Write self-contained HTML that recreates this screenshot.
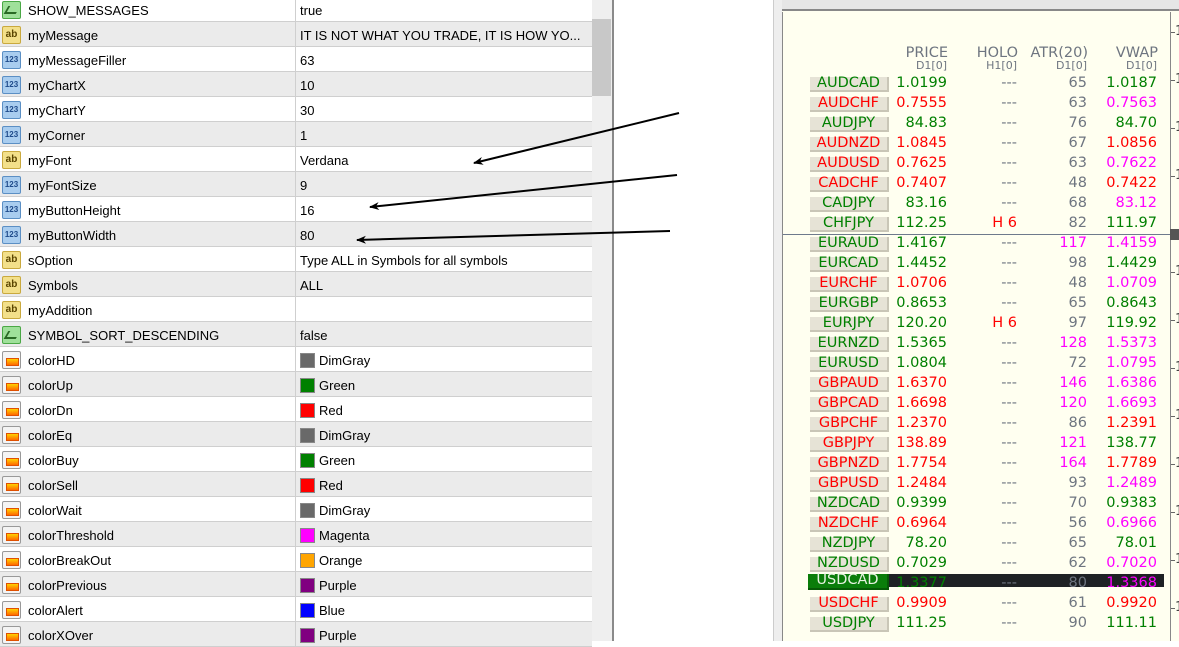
<!DOCTYPE html>
<html><head><meta charset="utf-8"><style>
*{margin:0;padding:0;box-sizing:border-box}
body{width:1179px;height:641px;overflow:hidden;background:#fff;position:relative;font-family:Tahoma,"Liberation Sans",sans-serif;font-size:13px;color:#000}
.r{position:absolute;left:0;width:592px;height:25px;border-bottom:1px solid #cfcfcf;background:#fff}
.r.g{background:#ebebeb}
.r .n{position:absolute;left:28px;top:6px}
.r .v{position:absolute;left:300px;top:6px;white-space:nowrap}
.r .d{position:absolute;left:295px;top:0;width:1px;height:25px;background:#cfcfcf}
.ic{position:absolute;left:2px;top:4px;width:19px;height:18px;border-radius:2px}
.ab{background:#f3e08a;border:1px solid #c9a93e;font:bold 10px "Liberation Sans",sans-serif;color:#5a4500;text-align:center;line-height:16px}
.nm{background:#a9cdef;border:1px solid #5b8fc4;font:bold 8px "Liberation Sans",sans-serif;color:#1e4a8a;text-align:center;line-height:16px}
.bo{background:#9fe09a;border:1px solid #4aa845}
.bo:after{content:"";position:absolute;left:3px;top:4px;width:10px;height:6px;border-left:2px solid #2a6a25;border-bottom:2px solid #2a6a25;transform:skewX(-30deg)}
.co{background:#f4f4f4;border:1px solid #999}
.co:after{content:"";position:absolute;left:3px;top:6px;width:11px;height:6px;background:linear-gradient(#ffd200,#ff6a00);border:1px solid #e05000}
.sw{display:inline-block;width:15px;height:15px;border:1px solid #888;vertical-align:-3px;margin-right:4px}
#sb{position:absolute;left:592px;top:0;width:20px;height:641px;background:#efefef}
#th{position:absolute;left:592px;top:19px;width:19px;height:77px;background:#c8c8c8}
#bd{position:absolute;left:612px;top:0;width:2px;height:641px;background:#8a8a8a}
#gs{position:absolute;left:773px;top:0;width:9px;height:641px;background:#eeeeee;border-left:1px solid #ccc}
#ch{position:absolute;left:782px;top:0;width:397px;height:641px;background:#fffff0}
#ct{position:absolute;left:782px;top:0;width:397px;height:9px;background:#e6e6e6}
#cl{position:absolute;left:782px;top:9px;width:397px;height:2px;background:#888}
#cb{position:absolute;left:782px;top:12px;width:1px;height:629px;background:#888}
#ax{position:absolute;left:1170px;top:12px;width:1px;height:629px;background:#888}
.tk{position:absolute;left:1171px;width:4px;height:1px;background:#666}
.tl{position:absolute;left:1175px;font:13px "DejaVu Sans",sans-serif;color:#444}
.q{position:absolute;left:783px;width:387px;height:20px;font:14.5px "DejaVu Sans",Verdana,sans-serif;white-space:nowrap}
.q span{position:absolute;top:0}
.btn{left:27px;width:79px;height:15px;top:2px!important;background:#e6e3d6;border-right:2px solid #c9c6b7;border-bottom:2px solid #c9c6b7;text-align:center;line-height:13px}
.p{right:223px}.h{right:153px}.a{right:83px}.w{right:13px}
.G{color:#008000}.R{color:#ff0000}.M{color:#ff00ff}.S{color:#6e7580}
.hd{position:absolute;font:14.5px "DejaVu Sans",sans-serif;color:#6e7580;text-align:right}
.hs{position:absolute;font:11px "DejaVu Sans",sans-serif;color:#6e7580;text-align:right}
</style></head><body>
<div class="r" style="top:-3px"><div class="ic bo"></div><span class="n">SHOW_MESSAGES</span><div class="d"></div><span class="v">true</span></div>
<div class="r g" style="top:22px"><div class="ic ab">ab</div><span class="n">myMessage</span><div class="d"></div><span class="v">IT IS NOT WHAT YOU TRADE, IT IS HOW YO...</span></div>
<div class="r" style="top:47px"><div class="ic nm">123</div><span class="n">myMessageFiller</span><div class="d"></div><span class="v">63</span></div>
<div class="r g" style="top:72px"><div class="ic nm">123</div><span class="n">myChartX</span><div class="d"></div><span class="v">10</span></div>
<div class="r" style="top:97px"><div class="ic nm">123</div><span class="n">myChartY</span><div class="d"></div><span class="v">30</span></div>
<div class="r g" style="top:122px"><div class="ic nm">123</div><span class="n">myCorner</span><div class="d"></div><span class="v">1</span></div>
<div class="r" style="top:147px"><div class="ic ab">ab</div><span class="n">myFont</span><div class="d"></div><span class="v">Verdana</span></div>
<div class="r g" style="top:172px"><div class="ic nm">123</div><span class="n">myFontSize</span><div class="d"></div><span class="v">9</span></div>
<div class="r" style="top:197px"><div class="ic nm">123</div><span class="n">myButtonHeight</span><div class="d"></div><span class="v">16</span></div>
<div class="r g" style="top:222px"><div class="ic nm">123</div><span class="n">myButtonWidth</span><div class="d"></div><span class="v">80</span></div>
<div class="r" style="top:247px"><div class="ic ab">ab</div><span class="n">sOption</span><div class="d"></div><span class="v">Type ALL in Symbols for all symbols</span></div>
<div class="r g" style="top:272px"><div class="ic ab">ab</div><span class="n">Symbols</span><div class="d"></div><span class="v">ALL</span></div>
<div class="r" style="top:297px"><div class="ic ab">ab</div><span class="n">myAddition</span><div class="d"></div><span class="v"></span></div>
<div class="r g" style="top:322px"><div class="ic bo"></div><span class="n">SYMBOL_SORT_DESCENDING</span><div class="d"></div><span class="v">false</span></div>
<div class="r" style="top:347px"><div class="ic co"></div><span class="n">colorHD</span><div class="d"></div><span class="v"><i class="sw" style="background:#696969"></i>DimGray</span></div>
<div class="r g" style="top:372px"><div class="ic co"></div><span class="n">colorUp</span><div class="d"></div><span class="v"><i class="sw" style="background:#008000"></i>Green</span></div>
<div class="r" style="top:397px"><div class="ic co"></div><span class="n">colorDn</span><div class="d"></div><span class="v"><i class="sw" style="background:#f00"></i>Red</span></div>
<div class="r g" style="top:422px"><div class="ic co"></div><span class="n">colorEq</span><div class="d"></div><span class="v"><i class="sw" style="background:#696969"></i>DimGray</span></div>
<div class="r" style="top:447px"><div class="ic co"></div><span class="n">colorBuy</span><div class="d"></div><span class="v"><i class="sw" style="background:#008000"></i>Green</span></div>
<div class="r g" style="top:472px"><div class="ic co"></div><span class="n">colorSell</span><div class="d"></div><span class="v"><i class="sw" style="background:#f00"></i>Red</span></div>
<div class="r" style="top:497px"><div class="ic co"></div><span class="n">colorWait</span><div class="d"></div><span class="v"><i class="sw" style="background:#696969"></i>DimGray</span></div>
<div class="r g" style="top:522px"><div class="ic co"></div><span class="n">colorThreshold</span><div class="d"></div><span class="v"><i class="sw" style="background:#f0f"></i>Magenta</span></div>
<div class="r" style="top:547px"><div class="ic co"></div><span class="n">colorBreakOut</span><div class="d"></div><span class="v"><i class="sw" style="background:#ffa500"></i>Orange</span></div>
<div class="r g" style="top:572px"><div class="ic co"></div><span class="n">colorPrevious</span><div class="d"></div><span class="v"><i class="sw" style="background:#800080"></i>Purple</span></div>
<div class="r" style="top:597px"><div class="ic co"></div><span class="n">colorAlert</span><div class="d"></div><span class="v"><i class="sw" style="background:#00f"></i>Blue</span></div>
<div class="r g" style="top:622px"><div class="ic co"></div><span class="n">colorXOver</span><div class="d"></div><span class="v"><i class="sw" style="background:#800080"></i>Purple</span></div>

<div id="sb"></div><div id="th"></div><div id="bd"></div><div id="gs"></div>
<div id="ch"></div><div id="ct"></div><div id="cl"></div><div id="cb"></div><div id="ax"></div>
<div class="tk" style="top:32px"></div><div class="tl" style="top:24px">1</div>
<div class="tk" style="top:80px"></div><div class="tl" style="top:72px">1</div>
<div class="tk" style="top:128px"></div><div class="tl" style="top:120px">1</div>
<div class="tk" style="top:176px"></div><div class="tl" style="top:168px">1</div>
<div class="tk" style="top:272px"></div><div class="tl" style="top:264px">1</div>
<div class="tk" style="top:320px"></div><div class="tl" style="top:312px">1</div>
<div class="tk" style="top:368px"></div><div class="tl" style="top:360px">1</div>
<div class="tk" style="top:416px"></div><div class="tl" style="top:408px">1</div>
<div class="tk" style="top:464px"></div><div class="tl" style="top:456px">1</div>
<div class="tk" style="top:512px"></div><div class="tl" style="top:504px">1</div>
<div class="tk" style="top:560px"></div><div class="tl" style="top:552px">1</div>
<div class="tk" style="top:608px"></div><div class="tl" style="top:600px">1</div>
<div style="position:absolute;left:1170px;top:229px;width:9px;height:11px;background:#555"></div>
<div style="position:absolute;left:783px;top:234px;width:387px;height:1px;background:#6e7a8c"></div>

<div class="hd" style="left:880px;width:68px;top:45px">PRICE</div><div class="hs" style="left:880px;width:67px;top:59px">D1[0]</div>
<div class="hd" style="left:950px;width:68px;top:45px">HOLO</div><div class="hs" style="left:950px;width:67px;top:59px">H1[0]</div>
<div class="hd" style="left:1000px;width:88px;top:45px">ATR(20)</div><div class="hs" style="left:1020px;width:67px;top:59px">D1[0]</div>
<div class="hd" style="left:1090px;width:68px;top:45px">VWAP</div><div class="hs" style="left:1090px;width:67px;top:59px">D1[0]</div>

<div class="q" style="top:75px"><span class="btn G">AUDCAD</span><span class="p G">1.0199</span><span class="h S">---</span><span class="a S">65</span><span class="w G">1.0187</span></div>
<div class="q" style="top:95px"><span class="btn R">AUDCHF</span><span class="p R">0.7555</span><span class="h S">---</span><span class="a S">63</span><span class="w M">0.7563</span></div>
<div class="q" style="top:115px"><span class="btn G">AUDJPY</span><span class="p G">84.83</span><span class="h S">---</span><span class="a S">76</span><span class="w G">84.70</span></div>
<div class="q" style="top:135px"><span class="btn R">AUDNZD</span><span class="p R">1.0845</span><span class="h S">---</span><span class="a S">67</span><span class="w R">1.0856</span></div>
<div class="q" style="top:155px"><span class="btn R">AUDUSD</span><span class="p R">0.7625</span><span class="h S">---</span><span class="a S">63</span><span class="w M">0.7622</span></div>
<div class="q" style="top:175px"><span class="btn R">CADCHF</span><span class="p R">0.7407</span><span class="h S">---</span><span class="a S">48</span><span class="w R">0.7422</span></div>
<div class="q" style="top:195px"><span class="btn G">CADJPY</span><span class="p G">83.16</span><span class="h S">---</span><span class="a S">68</span><span class="w M">83.12</span></div>
<div class="q" style="top:215px"><span class="btn G">CHFJPY</span><span class="p G">112.25</span><span class="h R">H 6</span><span class="a S">82</span><span class="w G">111.97</span></div>
<div class="q" style="top:235px"><span class="btn G">EURAUD</span><span class="p G">1.4167</span><span class="h S">---</span><span class="a M">117</span><span class="w M">1.4159</span></div>
<div class="q" style="top:255px"><span class="btn G">EURCAD</span><span class="p G">1.4452</span><span class="h S">---</span><span class="a S">98</span><span class="w G">1.4429</span></div>
<div class="q" style="top:275px"><span class="btn R">EURCHF</span><span class="p R">1.0706</span><span class="h S">---</span><span class="a S">48</span><span class="w M">1.0709</span></div>
<div class="q" style="top:295px"><span class="btn G">EURGBP</span><span class="p G">0.8653</span><span class="h S">---</span><span class="a S">65</span><span class="w G">0.8643</span></div>
<div class="q" style="top:315px"><span class="btn G">EURJPY</span><span class="p G">120.20</span><span class="h R">H 6</span><span class="a S">97</span><span class="w G">119.92</span></div>
<div class="q" style="top:335px"><span class="btn G">EURNZD</span><span class="p G">1.5365</span><span class="h S">---</span><span class="a M">128</span><span class="w M">1.5373</span></div>
<div class="q" style="top:355px"><span class="btn G">EURUSD</span><span class="p G">1.0804</span><span class="h S">---</span><span class="a S">72</span><span class="w M">1.0795</span></div>
<div class="q" style="top:375px"><span class="btn R">GBPAUD</span><span class="p R">1.6370</span><span class="h S">---</span><span class="a M">146</span><span class="w M">1.6386</span></div>
<div class="q" style="top:395px"><span class="btn R">GBPCAD</span><span class="p R">1.6698</span><span class="h S">---</span><span class="a M">120</span><span class="w M">1.6693</span></div>
<div class="q" style="top:415px"><span class="btn R">GBPCHF</span><span class="p R">1.2370</span><span class="h S">---</span><span class="a S">86</span><span class="w R">1.2391</span></div>
<div class="q" style="top:435px"><span class="btn R">GBPJPY</span><span class="p R">138.89</span><span class="h S">---</span><span class="a M">121</span><span class="w G">138.77</span></div>
<div class="q" style="top:455px"><span class="btn R">GBPNZD</span><span class="p R">1.7754</span><span class="h S">---</span><span class="a M">164</span><span class="w R">1.7789</span></div>
<div class="q" style="top:475px"><span class="btn R">GBPUSD</span><span class="p R">1.2484</span><span class="h S">---</span><span class="a S">93</span><span class="w M">1.2489</span></div>
<div class="q" style="top:495px"><span class="btn G">NZDCAD</span><span class="p G">0.9399</span><span class="h S">---</span><span class="a S">70</span><span class="w G">0.9383</span></div>
<div class="q" style="top:515px"><span class="btn R">NZDCHF</span><span class="p R">0.6964</span><span class="h S">---</span><span class="a S">56</span><span class="w M">0.6966</span></div>
<div class="q" style="top:535px"><span class="btn G">NZDJPY</span><span class="p G">78.20</span><span class="h S">---</span><span class="a S">65</span><span class="w G">78.01</span></div>
<div class="q" style="top:555px"><span class="btn G">NZDUSD</span><span class="p G">0.7029</span><span class="h S">---</span><span class="a S">62</span><span class="w M">0.7020</span></div>
<div style="position:absolute;left:888px;top:574px;width:276px;height:13px;background:#1e2124"></div>
<div class="q" style="top:575px"><span class="btn" style="background:#0a7d0a;color:#e6f2e0;border-color:#065a06;left:25px;width:81px;top:-1px!important;height:16px">USDCAD</span><span class="p G">1.3377</span><span class="h S">---</span><span class="a S">80</span><span class="w M">1.3368</span></div>
<div class="q" style="top:595px"><span class="btn R">USDCHF</span><span class="p R">0.9909</span><span class="h S">---</span><span class="a S">61</span><span class="w R">0.9920</span></div>
<div class="q" style="top:615px"><span class="btn G">USDJPY</span><span class="p G">111.25</span><span class="h S">---</span><span class="a S">90</span><span class="w G">111.11</span></div>

<svg style="position:absolute;left:0;top:0" width="1179" height="641">
<defs><marker id="m" markerWidth="10" markerHeight="8" refX="9" refY="4" orient="auto" markerUnits="userSpaceOnUse"><path d="M0,0 L10,4 L0,8 L3,4 Z" fill="#000"/></marker></defs>
<g stroke="#000" stroke-width="2" marker-end="url(#m)">
<line x1="679" y1="113" x2="474" y2="163"/>
<line x1="677" y1="175" x2="370" y2="207"/>
<line x1="670" y1="231" x2="357" y2="240"/>
</g></svg>
</body></html>
